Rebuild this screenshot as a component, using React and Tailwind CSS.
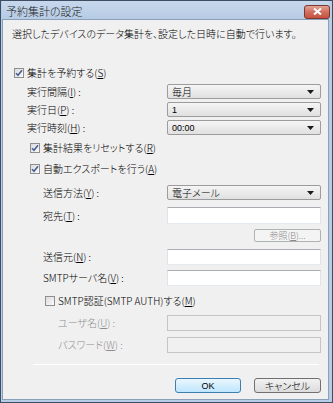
import React from "react";

// Windows 7 style dialog: 予約集計の設定

const Check = ({ checked }) => (
  <span className="w-[10px] h-[10px] border border-[#8e8f8f] bg-linear-to-br from-[#dcdcdc] to-[#fafafa] flex items-center justify-center shrink-0">
    {checked && (
      <svg width="8" height="8" viewBox="0 0 8 8">
        <path d="M1 4.2 L3 6.3 L7 1.2" stroke="#4a5f97" strokeWidth="1.6" fill="none" />
      </svg>
    )}
  </span>
);

const Select = ({ value, small }) => (
  <div className="w-[154px] h-[15px] border border-[#9c9c9c] rounded-[2px] bg-linear-to-b from-[#f5f5f5] to-[#e0e0e0] flex items-center justify-between pl-[4px] pr-[6px]">
    <span className={small ? "text-[9px] font-['Liberation_Sans',sans-serif]" : ""}>{value}</span>
    <svg width="7" height="4" viewBox="0 0 7 4">
      <path d="M0 0 H7 L3.5 4 Z" fill="#1a1a1a" />
    </svg>
  </div>
);

const Input = ({ disabled, h = "h-[16px]" }) => (
  <div
    className={`w-[154px] ${h} border ${
      disabled
        ? "border-[#c5c5c5] bg-[#f0f0f0]"
        : "border-[#abadb3] border-l-[#e2e3ea] border-r-[#e2e3ea] border-b-[#e3e9ef] bg-white"
    }`}
  />
);

const Row = ({ label, indent, children, disabled, mt }) => (
  <div className={`flex items-center ${mt}`}>
    <span className={`${indent} ${disabled ? "text-[#8d8d8d]" : ""}`}>{label}</span>
    <div className="ml-auto mr-[7px]">{children}</div>
  </div>
);

export default function App() {
  return (
    <div className="w-[333px] h-[403px] bg-[#3d4d63] p-[1px] font-['Noto_Sans_CJK_JP',sans-serif] font-light text-[10px] leading-[12px] text-black [font-feature-settings:'palt']">
      <div className="w-full h-full bg-[#b7cde6] flex flex-col pl-[1px] pr-[3px] pb-[2px]">
        {/* Title bar */}
        <div className="h-[18px] flex items-center justify-between bg-linear-to-b from-[#c7d8ec] to-[#b6cbe4]">
          <span className="ml-[4px] mt-[2px] text-[11px] text-[#1b1b1b]">予約集計の設定</span>
          <div className="w-[26px] h-[14px] mr-[-1px] mt-[3px] rounded-[3px] border border-[#7a3a30] bg-[#c9604f] bg-linear-to-b from-[#e3a396] via-[#cf6e5f] to-[#c8503e] flex items-center justify-center">
            <svg width="9" height="7" viewBox="0 0 9 7">
              <path d="M1 0.5 L8 6.5 M8 0.5 L1 6.5" stroke="white" strokeWidth="2" />
            </svg>
          </div>
        </div>

        {/* Content */}
        <div className="flex-1 bg-[#f0f0f0] border border-[#8aa0ba] flex flex-col">
          <p className="mt-[8px] ml-[9px]">選択したデバイスのデータ集計を、設定した日時に自動で行います。</p>

          <label className="mt-[27px] ml-[11px] flex items-center gap-[3px]">
            <Check checked />
            <span>集計を予約する(<u>S</u>)</span>
          </label>

          <div className="mt-[5px] flex flex-col gap-[3px]">
            <Row label={<>実行間隔(<u>I</u>) :</>} indent="ml-[24px]">
              <Select value="毎月" />
            </Row>
            <Row label={<>実行日(<u>P</u>) :</>} indent="ml-[24px]">
              <Select value="1" small />
            </Row>
            <Row label={<>実行時刻(<u>H</u>) :</>} indent="ml-[24px]">
              <Select value="00:00" small />
            </Row>
          </div>

          <label className="mt-[7px] ml-[27px] flex items-center gap-[3px]">
            <Check checked />
            <span>集計結果をリセットする(<u>R</u>)</span>
          </label>
          <label className="mt-[9px] ml-[27px] flex items-center gap-[3px]">
            <Check checked />
            <span>自動エクスポートを行う(<u>A</u>)</span>
          </label>

          <Row label={<>送信方法(<u>Y</u>) :</>} indent="ml-[40px]" mt="mt-[10px]">
            <Select value="電子メール" />
          </Row>
          <Row label={<>宛先(<u>T</u>) :</>} indent="ml-[40px]" mt="mt-[7px]">
            <Input h="h-[17px]" />
          </Row>
          <div className="mt-[5px] flex justify-end mr-[7px]">
            <div className="w-[67px] h-[13px] border border-[#adb2b5] rounded-[2px] bg-[#f4f4f4] text-[#8a8a8a] flex items-center justify-center text-[9px]">
              参照(<u>B</u>)...
            </div>
          </div>
          <Row label={<>送信元(<u>N</u>) :</>} indent="ml-[40px]" mt="mt-[7px]">
            <Input />
          </Row>
          <Row label={<>SMTPサーバ名(<u>V</u>) :</>} indent="ml-[40px]" mt="mt-[5px]">
            <Input />
          </Row>

          <label className="mt-[9px] ml-[42px] flex items-center gap-[3px]">
            <Check />
            <span>SMTP認証(SMTP AUTH)する(<u>M</u>)</span>
          </label>

          <Row label={<>ユーザ名(<u>U</u>) :</>} indent="ml-[55px]" mt="mt-[8px]" disabled>
            <Input disabled />
          </Row>
          <Row label={<>パスワード(<u>W</u>) :</>} indent="ml-[55px]" mt="mt-[6px]" disabled>
            <Input disabled />
          </Row>

          <div className="mt-[11px] ml-[30px] mr-[9px] h-[1px] bg-[#a0a0a0] border-b border-white" />

          {/* Buttons */}
          <div className="mt-[13px] flex justify-end gap-[13px] mr-[7px]">
            <div className="w-[66px] h-[15px] border border-[#3c7fb1] rounded-[3px] bg-linear-to-b from-[#eaf6fd] to-[#bee6fd] flex items-center justify-center font-['Liberation_Sans',sans-serif] text-[9px]">
              OK
            </div>
            <div className="w-[67px] h-[15px] border border-[#707070] rounded-[3px] bg-linear-to-b from-[#f2f2f2] to-[#dcdcdc] flex items-center justify-center">
              キャンセル
            </div>
          </div>
        </div>
      </div>
    </div>
  );
}
